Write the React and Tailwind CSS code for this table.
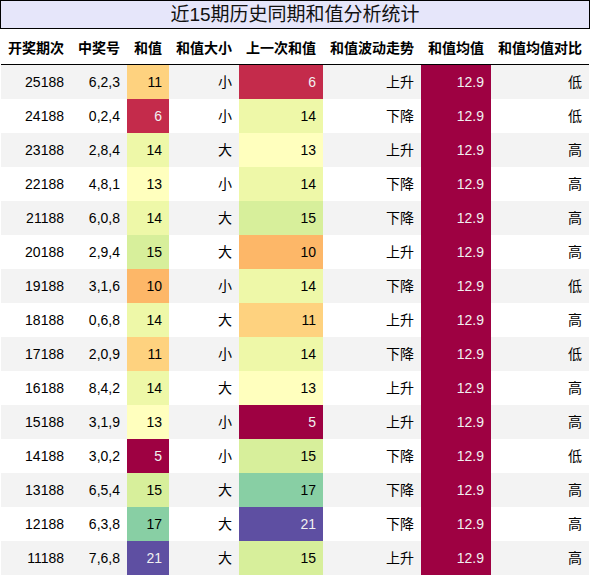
const rows = [
  ["25188", "6,2,3", 11, "小", 6, "上升", "低"],
  ["24188", "0,2,4", 6, "小", 14, "下降", "低"],
  ["23188", "2,8,4", 14, "大", 13, "上升", "高"],
  ["22188", "4,8,1", 13, "小", 14, "下降", "高"],
  ["21188", "6,0,8", 14, "大", 15, "下降", "高"],
  ["20188", "2,9,4", 15, "大", 10, "上升", "高"],
  ["19188", "3,1,6", 10, "小", 14, "下降", "低"],
  ["18188", "0,6,8", 14, "大", 11, "上升", "高"],
  ["17188", "2,0,9", 11, "小", 14, "下降", "低"],
  ["16188", "8,4,2", 14, "大", 13, "上升", "高"],
  ["15188", "3,1,9", 13, "小", 5, "上升", "高"],
  ["14188", "3,0,2", 5, "小", 15, "下降", "低"],
  ["13188", "6,5,4", 15, "大", 17, "下降", "高"],
  ["12188", "6,3,8", 17, "大", 21, "下降", "高"],
  ["11188", "7,6,8", 21, "大", 15, "上升", "高"],
];

const heat = {
  5: "bg-[#9e0142] text-[#f1f1f1]",
  6: "bg-[#c42b4b] text-[#f1f1f1]",
  10: "bg-[#fdb768] text-black",
  11: "bg-[#fed27f] text-black",
  13: "bg-[#ffffbe] text-black",
  14: "bg-[#eef8a8] text-black",
  15: "bg-[#d7ef9b] text-black",
  17: "bg-[#88cfa4] text-black",
  21: "bg-[#5e4fa2] text-[#f1f1f1]",
};

const headers = ["开奖期次", "中奖号", "和值", "和值大小", "上一次和值", "和值波动走势", "和值均值", "和值均值对比"];

const grid = "grid grid-cols-[70px_56px_42px_70px_84px_98px_70px_98px]";

export default function App() {
  return (
    <div className="w-[590px] h-[576px] bg-white font-['Liberation_Sans','Noto_Sans_CJK_SC',sans-serif] text-[14px] text-black overflow-hidden">
      <div className="h-[29px] border border-black bg-[#e6e6fa] flex items-center justify-center text-[19px] leading-none text-[#111]">
        近15期历史同期和值分析统计
      </div>

      <div className={`${grid} mx-[1px] h-[36px] border-b border-black`}>
        {headers.map((h) => (
          <div key={h} className="flex items-center justify-end pr-[7px] pt-[4px] font-bold whitespace-nowrap">
            {h}
          </div>
        ))}
      </div>

      <div className="mx-[1px]">
        {rows.map((r, i) => (
          <div key={r[0]} className={`${grid} h-[34px] ${i % 2 === 0 ? "bg-[#f3f3f3]" : "bg-white"}`}>
            <div className="flex items-center justify-end pr-[7px]">{r[0]}</div>
            <div className="flex items-center justify-end pr-[7px]">{r[1]}</div>
            <div className={`flex items-center justify-end pr-[7px] ${heat[r[2]]}`}>{r[2]}</div>
            <div className="flex items-center justify-end pr-[7px]">{r[3]}</div>
            <div className={`flex items-center justify-end pr-[7px] ${heat[r[4]]}`}>{r[4]}</div>
            <div className="flex items-center justify-end pr-[7px]">{r[5]}</div>
            <div className="flex items-center justify-end pr-[7px] bg-[#9e0142] text-[#f1f1f1]">12.9</div>
            <div className="flex items-center justify-end pr-[7px]">{r[6]}</div>
          </div>
        ))}
      </div>
    </div>
  );
}
